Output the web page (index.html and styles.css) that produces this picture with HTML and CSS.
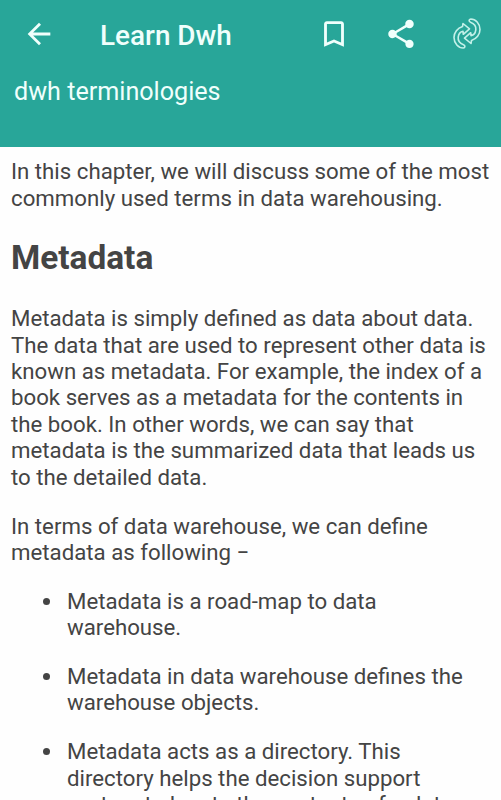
FILE: index.html
```
<!DOCTYPE html>
<html lang="en">
<head>
<meta charset="utf-8">
<meta name="viewport" content="width=device-width, initial-scale=1">
<title>Learn Dwh</title>
<link rel="stylesheet" href="styles.css">
</head>
<body>
<header class="header">
  <div class="toolbar">
    <svg class="back" width="34" height="34" viewBox="0 0 24 24"><path d="M20 11H7.83l5.59-5.59L12 4l-8 8 8 8 1.41-1.41L7.83 13H20z"/></svg>
    <h1 class="title">Learn Dwh</h1>
    <svg class="bookmark" width="34" height="34" viewBox="0 0 24 24"><path d="M17 3H7c-1.100 0-2 .9-2 2v16l7-3 7 3V5c0-1.100-.9-2-2-2zm0 15l-5-2.180L7 18V5h10z"/></svg>
    <svg class="share" width="34" height="34" viewBox="0 0 24 24"><path d="M18 16.080c-.76 0-1.440.3-1.960.77L8.910 12.700c.05-.23.090-.46.090-.7s-.04-.47-.09-.7l7.050-4.110c.54.5 1.250.81 2.040.81 1.660 0 3-1.340 3-3s-1.340-3-3-3-3 1.340-3 3c0 .24.040.47.090.7L8.040 9.810C7.500 9.310 6.790 9 6 9c-1.660 0-3 1.340-3 3s1.340 3 3 3c.79 0 1.500-.31 2.040-.81l7.120 4.160c-.05.21-.08.43-.08.65 0 1.610 1.310 2.920 2.920 2.920s2.920-1.310 2.920-2.920-1.310-2.920-2.920-2.920z"/></svg>
    <svg class="refresh" width="34" height="34" viewBox="0 0 34 34">
      <path d="M13.500 27.800C9.500 26.300 7.800 23.500 8.200 20.200C8.600 17 10.500 14.800 13 14.300L13.300 17.300L19.500 11.800L13 6.500L12.500 9.600C7.500 11 4 15.500 4 20.500C4 26.500 8.500 31 13.200 31C15.300 30.800 15.500 28.500 13.500 27.800Z"/>
      <path d="M20.500 5.200C24.500 6.700 26.200 9.500 25.800 12.800C25.400 16 23.500 18.200 21 18.700L20.700 15.700L14.500 21.200L21 26.500L21.500 23.400C26.500 22 30 17.500 30 12.500C30 6.500 25.500 2 20.800 2C18.700 2.200 18.500 4.500 20.500 5.200Z"/>
    </svg>
  </div>
  <p class="chapter">dwh terminologies</p>
</header>
<main class="content">
  <p>In this chapter, we will discuss some of the most<br>commonly used terms in data warehousing.</p>
  <h2>Metadata</h2>
  <p>Metadata is simply defined as data about data.<br>The data that are used to represent other data is<br>known as metadata. For example, the index of a<br>book serves as a metadata for the contents in<br>the book. In other words, we can say that<br>metadata is the summarized data that leads us<br>to the detailed data.</p>
  <p>In terms of data warehouse, we can define<br>metadata as following −</p>
  <ul>
    <li><p>Metadata is a road-map to data<br>warehouse.</p></li>
    <li><p>Metadata in data warehouse defines the<br>warehouse objects.</p></li>
    <li><p>Metadata acts as a directory. This<br>directory helps the decision support<br>system to locate the contents of a data</p></li>
  </ul>
</main>
</body>
</html>
```
FILE: styles.css
```
* { box-sizing: border-box; }
body {
  margin: 0;
  height: 800px;
  overflow: hidden;
  background: #fefefe;
  color: #444;
  font-family: Roboto, sans-serif;
}
.header {
  height: 147px;
  background: #28a699;
  color: #f0fffc;
}
.toolbar {
  display: flex;
  align-items: center;
  height: 68px;
  padding-left: 22px;
}
.toolbar svg { flex: none; fill: #f0fffc; }
.title {
  width: 217px;
  margin: 3px 0 0 44px;
  font-size: 27.900px;
  font-weight: 500;
  line-height: 32px;
  white-space: nowrap;
}
.share { margin-left: 32.500px; }
.toolbar .refresh {
  margin-left: 32px;
  fill: none;
  stroke: #c3f1e9;
  stroke-width: 1.6;
  stroke-linejoin: round;
}
.chapter {
  margin: 8px 0 0 14px;
  font-size: 25.150px;
  line-height: 32px;
}
.content {
  padding: 11.200px 0 0 11px;
  font-size: 22.240px;
  line-height: 26.450px;
  white-space: nowrap;
}
.content p { margin: 0 0 22.300px; }
.content h2 {
  margin: 27px 0 28px;
  font-size: 33.400px;
  line-height: 39px;
}
.content ul {
  margin: 0;
  padding-left: 32px;
  list-style: none;
}
.content li { display: flex; }
.content li::before {
  content: "";
  flex: none;
  width: 7px;
  height: 7px;
  margin: 10px 17px 0 0;
  border-radius: 50%;
  background: #444;
}
```
